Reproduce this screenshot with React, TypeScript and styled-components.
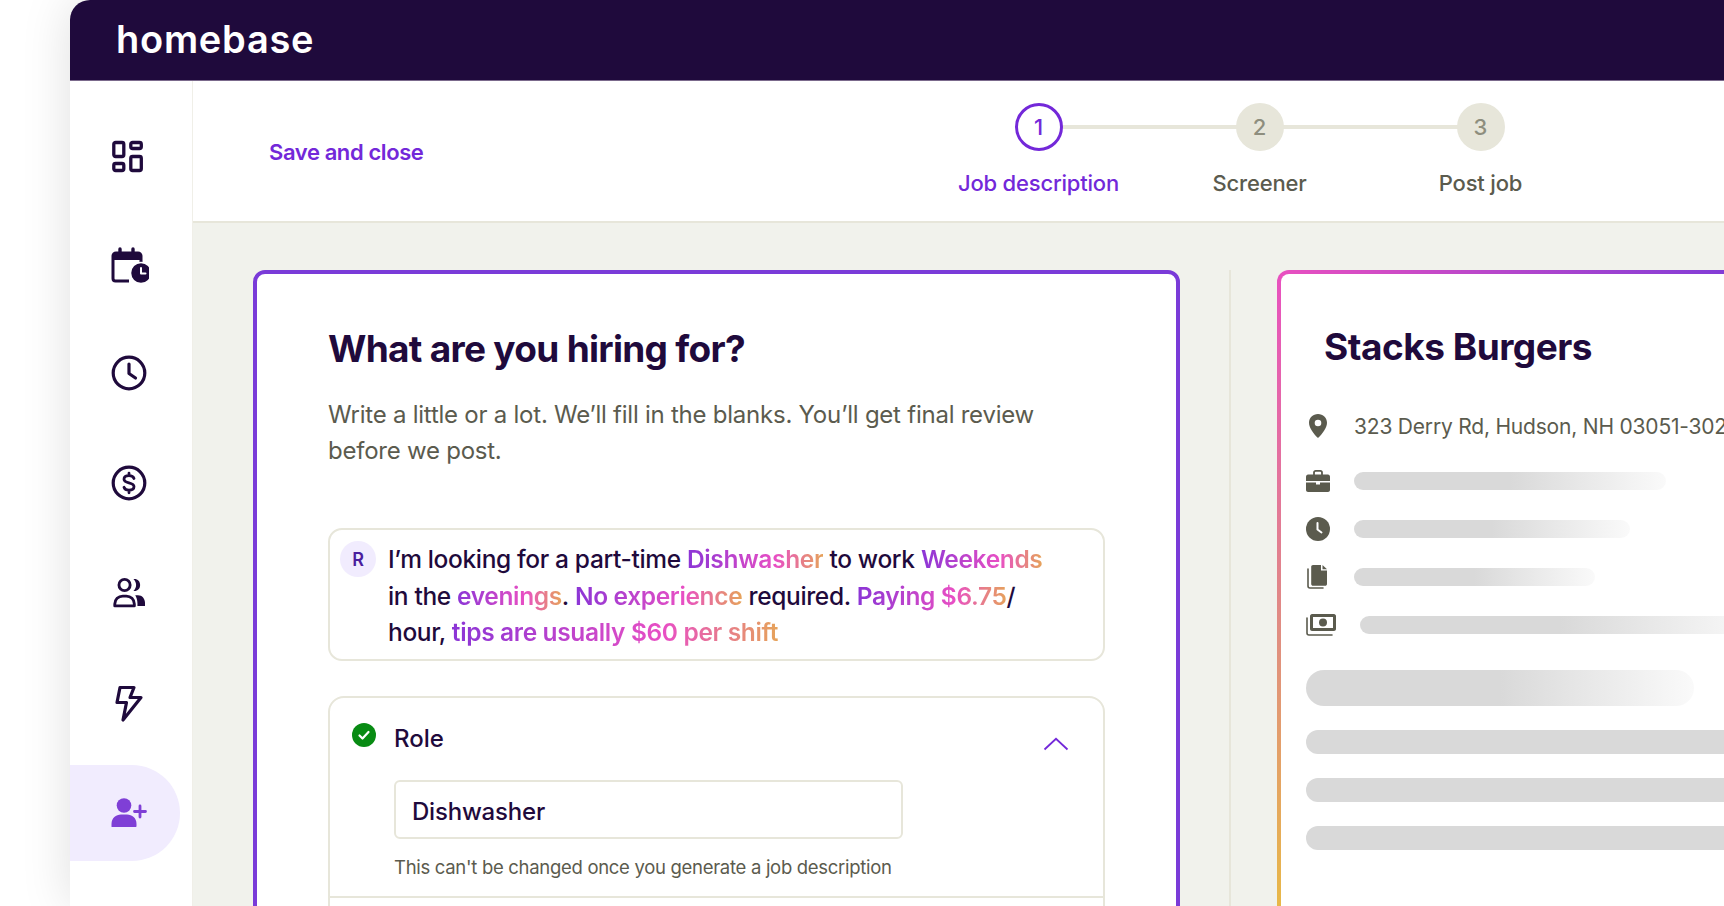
import React from "react";
import styled, { createGlobalStyle } from "styled-components";

const FONT = `"Inter", "Noto Sans", sans-serif`;
const INK = "#1F0A3C";
const PURPLE = "#7328D9";
const LINE = "#E7E6DA";
const MUTED = "#5B5B4E";

const Global = createGlobalStyle`
  html, body { margin: 0; padding: 0; background: #fff; overflow: hidden; }
  body { font-family: ${FONT}; color: ${INK}; }
`;

const Page = styled.div`
  height: 906px;
  padding-left: 70px;
  overflow: hidden;
  box-sizing: border-box;
`;
const Win = styled.div`
  height: 100%;
  display: flex;
  flex-direction: column;
  background: #fff;
  border-radius: 20px 0 0 0;
  box-shadow: 0 0 50px rgba(0, 0, 0, 0.13);
`;
const Header = styled.header`
  height: 81px;
  flex: none;
  display: flex;
  align-items: center;
  padding: 0 0 2px 46px;
  box-sizing: border-box;
  background: #1f0a3c;
  border-radius: 20px 0 0 0;
  border-bottom: 1px solid #7b6a8c;
`;
const Logo = styled.div`
  font-family: "Inter", sans-serif;
  font-size: 38px;
  font-weight: 600;
  color: #fff;
  letter-spacing: 0.75px;
`;
const Body = styled.div`
  flex: 1;
  min-height: 0;
  display: flex;
`;
const Sidebar = styled.nav`
  width: 123px;
  flex: none;
  box-sizing: border-box;
  border-right: 1px solid #f0efe8;
  padding-top: 24px;
  display: flex;
  flex-direction: column;
  gap: 14px;
`;
const NavItem = styled.div<{ $active?: boolean }>`
  width: 110px;
  height: 96px;
  flex: none;
  display: flex;
  align-items: center;
  justify-content: center;
  padding-left: 7px;
  box-sizing: border-box;
  background: ${(p) => (p.$active ? "#F1ECFE" : "transparent")};
  border-radius: 0 48px 48px 0;
  color: ${(p) => (p.$active ? "#7F3FD6" : INK)};
`;
const Main = styled.main`
  flex: 1;
  min-width: 0;
  display: flex;
  flex-direction: column;
`;
const TopBar = styled.div`
  height: 142px;
  flex: none;
  box-sizing: border-box;
  border-bottom: 2px solid ${LINE};
  display: grid;
  grid-template-columns: 735px auto;
`;
const SaveLink = styled.a`
  align-self: center;
  padding: 2px 0 0 76px;
  font-size: 22px;
  font-weight: 600;
  letter-spacing: -0.4px;
  color: ${PURPLE};
`;
const Stepper = styled.ol`
  margin: 0;
  padding: 22px 0 0;
  list-style: none;
  display: grid;
  grid-template-columns: repeat(3, 221px);
`;
const Step = styled.li<{ $last?: boolean }>`
  position: relative;
  display: flex;
  flex-direction: column;
  align-items: center;
  &::after {
    content: "";
    display: ${(p) => (p.$last ? "none" : "block")};
    position: absolute;
    left: 50%;
    top: 22px;
    width: 100%;
    height: 4px;
    background: ${LINE};
  }
`;
const Bubble = styled.div<{ $active?: boolean }>`
  position: relative;
  z-index: 1;
  width: 48px;
  height: 48px;
  box-sizing: border-box;
  border-radius: 50%;
  display: flex;
  align-items: center;
  justify-content: center;
  font-size: 22px;
  font-weight: 500;
  background: ${(p) => (p.$active ? "#fff" : LINE)};
  border: ${(p) => (p.$active ? `3px solid ${PURPLE}` : "none")};
  color: ${(p) => (p.$active ? PURPLE : "#8E8E7E")};
`;
const StepLabel = styled.div<{ $active?: boolean }>`
  margin-top: 18px;
  font-size: 22px;
  line-height: 28px;
  font-weight: 500;
  letter-spacing: -0.2px;
  white-space: nowrap;
  color: ${(p) => (p.$active ? PURPLE : MUTED)};
`;
const Content = styled.div`
  flex: 1;
  min-height: 0;
  overflow: hidden;
  background: #f1f2ec;
  padding: 47px 0 0 60px;
  display: flex;
  align-items: flex-start;
`;
const LeftCard = styled.section`
  flex: none;
  width: 927px;
  height: 800px;
  box-sizing: border-box;
  padding: 52px 71px 0;
  background: #fff;
  border: 4px solid #7a3bd8;
  border-radius: 12px;
`;
const Title = styled.h1`
  margin: 0;
  font-size: 37px;
  line-height: 46px;
  font-weight: 700;
  letter-spacing: -0.7px;
  color: ${INK};
`;
const Sub = styled.p`
  margin: 25px 0 0;
  font-size: 24px;
  line-height: 36px;
  letter-spacing: -0.24px;
  color: ${MUTED};
`;
const PromptBox = styled.div`
  margin-top: 59px;
  height: 133px;
  box-sizing: border-box;
  border: 2px solid ${LINE};
  border-radius: 14px;
  padding: 11px 10px 0;
  display: flex;
  gap: 12px;
`;
const Avatar = styled.div`
  flex: none;
  width: 36px;
  height: 36px;
  border-radius: 50%;
  background: #f1ecfe;
  color: #4b1f9e;
  font-size: 18px;
  font-weight: 600;
  display: flex;
  align-items: center;
  justify-content: center;
`;
const PromptText = styled.div`
  font-size: 24.5px;
  line-height: 36.5px;
  font-weight: 500;
  letter-spacing: -0.35px;
  width: 668px;
  color: ${INK};
`;
const Hi = styled.span`
  font-weight: 600;
  background: linear-gradient(90deg, #8b35d6, #e84fc4 65%, #e6a35a);
  -webkit-background-clip: text;
  background-clip: text;
  color: transparent;
`;
const RoleBox = styled.div`
  margin-top: 35px;
  height: 300px;
  box-sizing: border-box;
  border: 2px solid ${LINE};
  border-radius: 16px;
`;
const RoleBody = styled.div`
  height: 200px;
  box-sizing: border-box;
  padding: 27px 0 0 64px;
  border-bottom: 2px solid ${LINE};
`;
const RoleHead = styled.div`
  display: flex;
  align-items: center;
  height: 28px;
  position: relative;
  padding-right: 34px;
`;
const RoleLabel = styled.div`
  flex: 1;
  font-size: 24px;
  line-height: 28px;
  font-weight: 500;
`;
const RoleCheck = styled.span`
  position: absolute;
  left: -42px;
  top: -2px;
  display: flex;
`;
const Chevron = styled.span`
  display: flex;
  margin-top: 10px;
  color: ${PURPLE};
`;
const Field = styled.div`
  margin-top: 27px;
  width: 509px;
  height: 59px;
  box-sizing: border-box;
  border: 2px solid ${LINE};
  border-radius: 6px;
  padding: 3px 0 0 16px;
  display: flex;
  align-items: center;
  font-size: 24px;
  font-weight: 500;
  letter-spacing: -0.2px;
`;
const Helper = styled.div`
  margin-top: 16px;
  font-size: 18.5px;
  line-height: 24px;
  letter-spacing: -0.3px;
  color: ${MUTED};
`;
const Divider = styled.div`
  flex: none;
  width: 2px;
  height: 800px;
  margin: 0 46px 0 49px;
  background: ${LINE};
`;
const RightCard = styled.section`
  flex: none;
  width: 600px;
  height: 800px;
  box-sizing: border-box;
  padding: 50px 0 0 25px;
  border: 4px solid transparent;
  border-radius: 12px;
  background:
    linear-gradient(#fff, #fff) padding-box,
    linear-gradient(210deg, #7a3bd8 60px, #e850c0 300px, #e08f80 620px, #e8b848 850px) border-box;
`;
const Company = styled.h2`
  margin: 0 0 0 18px;
  font-size: 37px;
  line-height: 46px;
  font-weight: 700;
  letter-spacing: -0.5px;
  color: ${INK};
`;
const Facts = styled.div`
  margin-top: 41px;
  display: flex;
  flex-direction: column;
  gap: 18px;
`;
const FactRow = styled.div`
  height: 30px;
  display: flex;
  align-items: center;
  color: ${MUTED};
`;
const AddressRow = styled(FactRow)`
  margin-bottom: 7px;
`;
const FactIcon = styled.span<{ $w?: number }>`
  flex: none;
  width: ${(p) => p.$w ?? 48}px;
  display: flex;
`;
const Address = styled.span`
  font-size: 21px;
  letter-spacing: -0.2px;
  white-space: nowrap;
  color: ${MUTED};
`;
const FadeBar = styled.div<{ $w: number; $h?: number }>`
  width: ${(p) => p.$w}px;
  height: ${(p) => p.$h ?? 18}px;
  flex: none;
  border-radius: ${(p) => (p.$h ?? 18) / 2}px;
  background: linear-gradient(90deg, #d9d9d9 50%, #fafafa 100%);
`;
const BigBar = styled(FadeBar)`
  margin-top: 30px;
`;
const Lines = styled.div`
  margin-top: 24px;
  display: flex;
  flex-direction: column;
  gap: 24px;
`;
const SolidBar = styled.div`
  height: 24px;
  border-radius: 12px 0 0 12px;
  background: #d9d9d9;
`;

const Svg: React.FC<{ w: number; h: number; vb?: string; children: React.ReactNode }> = ({ w, h, vb, children }) => (
  <svg width={w} height={h} viewBox={vb ?? `0 0 ${w} ${h}`} fill="none" xmlns="http://www.w3.org/2000/svg">
    {children}
  </svg>
);

const IconDash = () => (
  <Svg w={40} h={40}>
    <g stroke="currentColor" strokeWidth="3.300" strokeLinejoin="round">
      <rect x="4.800" y="9.500" width="10" height="14" rx="1.800" />
      <rect x="21.800" y="9.500" width="10.500" height="6" rx="1.800" />
      <rect x="4.800" y="30.500" width="10" height="7" rx="1.800" />
      <rect x="21.800" y="23.500" width="10.500" height="14" rx="1.800" />
    </g>
  </Svg>
);
const IconCal = () => (
  <Svg w={40} h={40} vb="0 -2 40 40">
    <path d="M11 4v6M24 4v6" stroke="currentColor" strokeWidth="3.400" strokeLinecap="round" />
    <path d="M20 36H6.500A2.500 2.500 0 0 1 4 33.500V11a3 3 0 0 1 3-3h22a3 3 0 0 1 3 3v8" stroke="currentColor" strokeWidth="3" />
    <path d="M4 11a3 3 0 0 1 3-3h22a3 3 0 0 1 3 3v4H4z" fill="currentColor" />
    <circle cx="32" cy="28" r="10.500" fill="currentColor" stroke="#fff" strokeWidth="1.500" />
    <path d="M32 23v5.500h4.500" stroke="#fff" strokeWidth="2" strokeLinecap="round" strokeLinejoin="round" />
  </Svg>
);
const IconClock = () => (
  <Svg w={40} h={40}>
    <circle cx="20" cy="20" r="15.800" stroke="currentColor" strokeWidth="3.200" />
    <path d="M20 11v9.500l6.500 4.500" stroke="currentColor" strokeWidth="3.200" strokeLinecap="round" strokeLinejoin="round" />
  </Svg>
);
const IconDollar = () => (
  <Svg w={40} h={40}>
    <circle cx="20" cy="20" r="15.800" stroke="currentColor" strokeWidth="3.200" />
    <path d="M25 15.500c-.6-1.700-2.500-2.800-5-2.800-3 0-5 1.400-5 3.500 0 4.800 10 2.400 10 7.400 0 2.100-2 3.600-5 3.600-2.500 0-4.400-1.100-5-2.900M20 10.200v2.500M20 27.200v2.600" stroke="currentColor" strokeWidth="2.800" strokeLinecap="round" />
  </Svg>
);
const IconPeople = () => (
  <Svg w={36} h={32} vb="0 0 40 36">
    <circle cx="15" cy="9" r="6.300" stroke="currentColor" strokeWidth="3.200" />
    <path d="M4 32.500v-2c0-5.500 4-9 9-9h4c5 0 9 3.500 9 9v2z" stroke="currentColor" strokeWidth="3.200" strokeLinejoin="round" />
    <path d="M25 2.300c4.500-.6 7.500 2.500 7.500 6.700s-3 7.300-7.500 6.700c1.800-1.800 3-4.200 3-6.700s-1.200-4.900-3-6.700z" fill="currentColor" />
    <path d="M27 20.500h3c5 0 8 4 8 8.500v3.500h-8.500v-3c0-3.500-1-6.500-2.500-9z" fill="currentColor" />
  </Svg>
);
const IconBolt = () => (
  <Svg w={40} h={40} vb="0 -1 40 40">
    <path d="M11 3.500h14l-4 10h11L14 36l3.500-17.500H8z" stroke="currentColor" strokeWidth="3.200" strokeLinejoin="round" />
  </Svg>
);
const IconAdd = () => (
  <Svg w={40} h={34} vb="1 -1 40 34">
    <circle cx="16" cy="8.500" r="7.300" fill="currentColor" />
    <path d="M3.500 29v-2c0-6 4.500-9.500 9.500-9.500h6c5 0 9.500 3.500 9.500 9.500v2.300a.7.7 0 0 1-.7.700H4.200a.7.7 0 0 1-.7-1z" fill="currentColor" />
    <path d="M32 9v11M26.500 14.500h11" stroke="currentColor" strokeWidth="2.800" strokeLinecap="round" />
  </Svg>
);
const IconCheck = () => (
  <Svg w={24} h={24}>
    <circle cx="12" cy="12" r="12" fill="#088B13" />
    <path d="M7.500 12.500l3 3 6-6.500" stroke="#fff" strokeWidth="2.200" strokeLinecap="round" strokeLinejoin="round" />
  </Svg>
);
const IconChevron = () => (
  <Svg w={26} h={14}>
    <path d="M1.500 12.500L13 1.800l11.500 10.700" stroke="currentColor" strokeWidth="1.800" />
  </Svg>
);
const IconPin = () => (
  <Svg w={24} h={24}>
    <path fillRule="evenodd" d="M12 0c5 0 9 3.800 9 8.800 0 5-4.800 11.300-9 15.200C7.800 20.100 3 13.800 3 8.800 3 3.800 7 0 12 0zm0 5.700a3.300 3.300 0 1 0 0 6.600 3.300 3.300 0 0 0 0-6.600z" fill="currentColor" />
  </Svg>
);
const IconCase = () => (
  <Svg w={24} h={24}>
    <path d="M8 6V3.500C8 2.500 8.700 1.800 9.700 1.800h4.600c1 0 1.700.7 1.700 1.700V6" stroke="currentColor" strokeWidth="1.800" />
    <path d="M2 5.500h20c1 0 2 1 2 2V12H0V7.500c0-1 1-2 2-2z" fill="currentColor" />
    <path d="M0 13.500h10v2h4v-2h10V21c0 1-1 2-2 2H2c-1 0-2-1-2-2z" fill="currentColor" />
  </Svg>
);
const IconClockFill = () => (
  <Svg w={24} h={24}>
    <circle cx="12" cy="12" r="12" fill="currentColor" />
    <path d="M11.500 6v6.500l4 3" stroke="#fff" strokeWidth="2" strokeLinecap="round" strokeLinejoin="round" />
  </Svg>
);
const IconDocs = () => (
  <Svg w={24} h={24}>
    <path d="M7 0h8v5.500h6V19c0 1-.8 1.800-1.800 1.800H7c-1 0-1.800-.8-1.800-1.800V1.800C5.200.8 6 0 7 0z" fill="currentColor" />
    <path d="M16.500 0l4.500 4.200h-4.500z" fill="currentColor" />
    <path d="M2 4v17c0 1 1 2 2 2h13" stroke="currentColor" strokeWidth="1.600" strokeLinecap="round" />
  </Svg>
);
const IconMoney = () => (
  <Svg w={30} h={22}>
    <path fillRule="evenodd" d="M6 0h22c1 0 2 1 2 2v13c0 1-1 2-2 2H6c-1 0-2-1-2-2V2c0-1 1-2 2-2zm11 4.500a4 4 0 1 0 0 8 4 4 0 0 0 0-8zM7 3v11h20V3z" fill="currentColor" />
    <path d="M1 4v15c0 1 1 2 2 2h23" stroke="currentColor" strokeWidth="1.600" strokeLinecap="round" />
  </Svg>
);

const NAV = [
  { key: "dash", icon: <IconDash /> },
  { key: "cal", icon: <IconCal /> },
  { key: "clock", icon: <IconClock /> },
  { key: "dollar", icon: <IconDollar /> },
  { key: "people", icon: <IconPeople /> },
  { key: "bolt", icon: <IconBolt /> },
  { key: "add", icon: <IconAdd />, active: true },
];

const STEPS = [
  { n: 1, label: "Job description", active: true },
  { n: 2, label: "Screener" },
  { n: 3, label: "Post job", last: true },
];

const FACTS = [
  { key: "case", icon: <IconCase />, w: 312 },
  { key: "clock", icon: <IconClockFill />, w: 276 },
  { key: "docs", icon: <IconDocs />, w: 241 },
  { key: "money", icon: <IconMoney />, w: 400, iconW: 54 },
];

export default function App() {
  return (
    <>
      <Global />
      <Page>
        <Win>
          <Header>
            <Logo>homebase</Logo>
          </Header>
          <Body>
            <Sidebar>
              {NAV.map((n) => (
                <NavItem key={n.key} $active={n.active}>
                  {n.icon}
                </NavItem>
              ))}
            </Sidebar>
            <Main>
              <TopBar>
                <SaveLink>Save and close</SaveLink>
                <Stepper>
                  {STEPS.map((s) => (
                    <Step key={s.n} $last={s.last}>
                      <Bubble $active={s.active}>{s.n}</Bubble>
                      <StepLabel $active={s.active}>{s.label}</StepLabel>
                    </Step>
                  ))}
                </Stepper>
              </TopBar>
              <Content>
                <LeftCard>
                  <Title>What are you hiring for?</Title>
                  <Sub>
                    Write a little or a lot. We’ll fill in the blanks. You’ll get final review before we post.
                  </Sub>
                  <PromptBox>
                    <Avatar>R</Avatar>
                    <PromptText>
                      I’m looking for a part-time <Hi>Dishwasher</Hi> to work <Hi>Weekends</Hi> in the{" "}
                      <Hi>evenings</Hi>. <Hi>No experience</Hi> required. <Hi>Paying $6.75</Hi>/ hour,{" "}
                      <Hi>tips are usually $60 per shift</Hi>
                    </PromptText>
                  </PromptBox>
                  <RoleBox>
                    <RoleBody>
                      <RoleHead>
                        <RoleCheck>
                          <IconCheck />
                        </RoleCheck>
                        <RoleLabel>Role</RoleLabel>
                        <Chevron>
                          <IconChevron />
                        </Chevron>
                      </RoleHead>
                      <Field>Dishwasher</Field>
                      <Helper>This can't be changed once you generate a job description</Helper>
                    </RoleBody>
                  </RoleBox>
                </LeftCard>
                <Divider />
                <RightCard>
                  <Company>Stacks Burgers</Company>
                  <Facts>
                    <AddressRow>
                      <FactIcon>
                        <IconPin />
                      </FactIcon>
                      <Address>323 Derry Rd, Hudson, NH 03051-3025</Address>
                    </AddressRow>
                    {FACTS.map((f) => (
                      <FactRow key={f.key}>
                        <FactIcon $w={f.iconW}>{f.icon}</FactIcon>
                        <FadeBar $w={f.w} />
                      </FactRow>
                    ))}
                  </Facts>
                  <BigBar $w={388} $h={36} />
                  <Lines>
                    <SolidBar />
                    <SolidBar />
                    <SolidBar />
                  </Lines>
                </RightCard>
              </Content>
            </Main>
          </Body>
        </Win>
      </Page>
    </>
  );
}
